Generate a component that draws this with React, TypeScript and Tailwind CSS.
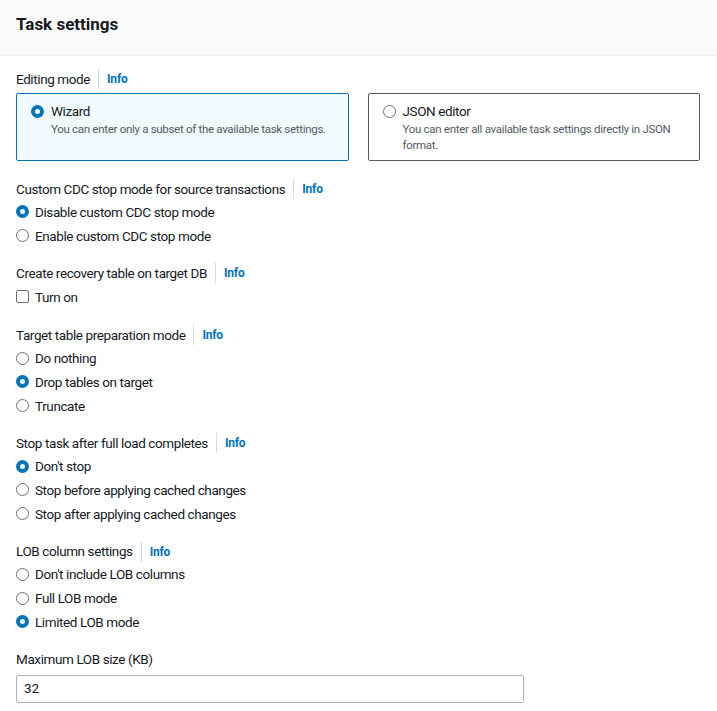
import React from 'react';

type Opt = { label: string; checked?: boolean };

const sections: { title: string; info: boolean; type: 'radio' | 'checkbox'; options: Opt[] }[] = [
  {
    title: 'Custom CDC stop mode for source transactions',
    info: true,
    type: 'radio',
    options: [{ label: 'Disable custom CDC stop mode', checked: true }, { label: 'Enable custom CDC stop mode' }],
  },
  {
    title: 'Create recovery table on target DB',
    info: true,
    type: 'checkbox',
    options: [{ label: 'Turn on' }],
  },
  {
    title: 'Target table preparation mode',
    info: true,
    type: 'radio',
    options: [{ label: 'Do nothing' }, { label: 'Drop tables on target', checked: true }, { label: 'Truncate' }],
  },
  {
    title: 'Stop task after full load completes',
    info: true,
    type: 'radio',
    options: [
      { label: "Don't stop", checked: true },
      { label: 'Stop before applying cached changes' },
      { label: 'Stop after applying cached changes' },
    ],
  },
  {
    title: 'LOB column settings',
    info: true,
    type: 'radio',
    options: [{ label: "Don't include LOB columns" }, { label: 'Full LOB mode' }, { label: 'Limited LOB mode', checked: true }],
  },
];

function Radio({ checked }: { checked?: boolean }) {
  return checked ? (
    <span className="inline-block h-[13px] w-[13px] shrink-0 rounded-full border-[4px] border-[#0073bb] bg-white" />
  ) : (
    <span className="inline-block h-[13px] w-[13px] shrink-0 rounded-full border border-[#687078] bg-white" />
  );
}

function Checkbox() {
  return <span className="inline-block h-[13px] w-[13px] shrink-0 rounded-[2px] border border-[#687078] bg-white" />;
}

function Label({ title, info }: { title: string; info: boolean }) {
  return (
    <div className="flex items-center h-[20px]">
      <span className="text-[13.5px] tracking-[-0.4px] text-[#16191f]">{title}</span>
      {info && (
        <>
          <span className="ml-[8px] mr-[8px] h-[20px] w-px bg-[#d5dbdb]" />
          <span className="text-[12px] font-bold tracking-[-0.2px] text-[#0073bb]">Info</span>
        </>
      )}
    </div>
  );
}

export default function App() {
  return (
    <div className="w-[717px] min-h-[711px] bg-white text-[#16191f]" style={{ fontFamily: 'Roboto, "Noto Sans", sans-serif' }}>
      <div className="h-[56px] bg-[#fafafa] border-b border-[#eaeded] px-4 flex items-center">
        <h2 className="text-[17px] font-bold text-[#16191f] -mt-[6px]">Task settings</h2>
      </div>

      <div className="px-4 pt-[13px]">
        <Label title="Editing mode" info />
        <div className="mt-[4px] grid grid-cols-2 gap-[19px] pr-[1px]">
          <div className="h-[68px] border border-[#0073bb] bg-[#f1faff] rounded-[2px] px-[14px] pt-[7px]">
            <div className="flex items-center gap-[7px]">
              <Radio checked />
              <span className="text-[13.5px] tracking-[-0.4px] leading-[20px]">Wizard</span>
            </div>
            <div className="pl-[20px] text-[11.5px] tracking-[-0.3px] leading-[16px] text-[#545b64]">
              You can enter only a subset of the available task settings.
            </div>
          </div>
          <div className="h-[68px] border border-[#545b64] bg-white rounded-[2px] px-[14px] pt-[7px]">
            <div className="flex items-center gap-[7px]">
              <Radio />
              <span className="text-[13.5px] tracking-[-0.4px] leading-[20px]">JSON editor</span>
            </div>
            <div className="pl-[20px] text-[11.5px] tracking-[-0.3px] leading-[16px] text-[#545b64]">
              You can enter all available task settings directly in JSON format.
            </div>
          </div>
        </div>

        <div className="mt-[18px] flex flex-col gap-[16px]">
          {sections.map((s) => (
            <div key={s.title}>
              <Label title={s.title} info={s.info} />
              <div className="mt-[1px] flex flex-col">
                {s.options.map((o) => (
                  <div
                    key={o.label}
                    className={s.type === 'checkbox' ? 'flex items-center gap-[6px] h-[25px]' : 'flex items-center gap-[6px] h-[23.7px]'}
                  >
                    {s.type === 'radio' ? <Radio checked={o.checked} /> : <Checkbox />}
                    <span className="text-[13.5px] tracking-[-0.4px] leading-[20px]">{o.label}</span>
                  </div>
                ))}
              </div>
            </div>
          ))}

          <div>
            <div className="h-[20px] flex items-center text-[13.5px] tracking-[-0.4px]">Maximum LOB size (KB)</div>
            <div className="mt-[5px] w-[508px] h-[28px] border border-[#aab7b8] rounded-[2px] px-[7px] flex items-center text-[13.5px]">
              32
            </div>
          </div>
        </div>
      </div>
    </div>
  );
}
